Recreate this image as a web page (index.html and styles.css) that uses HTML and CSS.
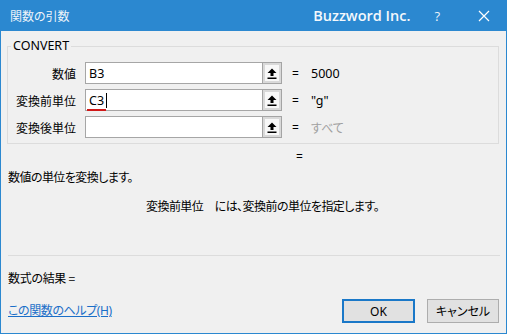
FILE: index.html
```html
<!DOCTYPE html>
<html lang="ja">
<head>
<meta charset="utf-8">
<link rel="stylesheet" href="styles.css">
</head>
<body>
<div class="window">
  <div class="titlebar">
    <span class="title">関数の引数</span>
    <span class="brand">Buzzword Inc.</span>
    <span class="help">?</span>
    <span class="close"><svg width="12" height="12" viewBox="0 0 12 12"><path d="M1 1L11 11M11 1L1 11" stroke="#fff" stroke-width="1.2" fill="none"/></svg></span>
  </div>
  <div class="body">
    <div class="group">
      <div class="legend">CONVERT</div>
      <div class="rows">
        <div class="label">数値</div>
        <div class="field"><span class="txt">B3</span></div>
        <div class="refbtn"><svg width="10" height="11" viewBox="0 0 10 11"><path d="M5 0.5L9.5 5H6.5V8H3.5V5H0.5Z" fill="#000"/><rect x="0.5" y="9.5" width="9" height="1.5" fill="#000"/></svg></div>
        <div class="eq">=</div>
        <div class="val">5000</div>

        <div class="label">変換前単位</div>
        <div class="field"><span class="txt squiggle">C3</span><span class="caret"></span></div>
        <div class="refbtn"><svg width="10" height="11" viewBox="0 0 10 11"><path d="M5 0.5L9.5 5H6.5V8H3.5V5H0.5Z" fill="#000"/><rect x="0.5" y="9.5" width="9" height="1.5" fill="#000"/></svg></div>
        <div class="eq">=</div>
        <div class="val">"g"</div>

        <div class="label">変換後単位</div>
        <div class="field"></div>
        <div class="refbtn"><svg width="10" height="11" viewBox="0 0 10 11"><path d="M5 0.5L9.5 5H6.5V8H3.5V5H0.5Z" fill="#000"/><rect x="0.5" y="9.5" width="9" height="1.5" fill="#000"/></svg></div>
        <div class="eq">=</div>
        <div class="val dim">すべて</div>
      </div>
    </div>
    <div class="result-eq">=</div>
    <div class="desc">数値の単位を変換します。</div>
    <div class="argdesc">変換前単位　には、変換前の単位を指定します。</div>
    <div class="sep"></div>
    <div class="formula">数式の結果 =</div>
    <div class="footer">
      <a class="helplink" href="#">この関数のヘルプ(H)</a>
      <div class="buttons">
        <button class="btn ok">OK</button>
        <button class="btn">キャンセル</button>
      </div>
    </div>
  </div>
</div>
</body>
</html>
```

FILE: styles.css
```css
* { box-sizing: border-box; }
html, body { margin: 0; padding: 0; }
body {
  width: 507px;
  height: 334px;
  overflow: hidden;
  font-family: "Noto Sans", "Noto Sans CJK JP", sans-serif;
  font-size: 12px;
  color: #000;
  background: #f0f0f0;
}
.window {
  width: 507px;
  height: 334px;
  background: #f0f0f0;
  border: 1px solid #2b88d0;
  border-top: none;
  display: flex;
  flex-direction: column;
}
.titlebar {
  height: 31px;
  margin: 0 -1px;
  background: #2b88d0;
  color: #fff;
  display: flex;
  align-items: center;
  padding-left: 10px;
  flex-shrink: 0;
}
.title {
  font-family: "Noto Sans CJK JP", sans-serif;
  font-feature-settings: "palt";
  font-size: 12px;
  color: #eef4fa;
  flex: 1;
}
.brand {
  font-family: "Open Sans", sans-serif;
  font-weight: 600;
  font-size: 14.5px;
  color: #f4f8fc;
  margin-right: 24px;
}
.help {
  font-family: "Open Sans", sans-serif;
  font-size: 13px;
  color: #eef4fa;
  margin-right: 38px;
}
.close {
  display: flex;
  margin-right: 17px;
}
.body {
  flex: 1;
  padding: 0 7px 0 6px;
  display: flex;
  flex-direction: column;
  font-family: "Noto Sans CJK JP", sans-serif;
  font-feature-settings: "palt";
}
.group {
  margin-top: 15px;
  border: 1px solid #dcdcdc;
  padding: 0 0 5px 0;
}
.legend {
  margin: -9px 0 0 3px;
  width: fit-content;
  padding: 0 2px;
  background: #f0f0f0;
  line-height: 16px;
  font-family: "Noto Sans", sans-serif;
  font-size: 12.5px;
}
.rows {
  margin-top: 8px;
  display: grid;
  grid-template-columns: 68px 186px 20px 29px auto;
  grid-auto-rows: 22px;
  row-gap: 5px;
  align-items: center;
}
.label {
  text-align: right;
}
.field {
  margin-left: 9px;
  height: 22px;
  background: #fff;
  border: 1px solid #a6a6a6;
  border-right: none;
  display: flex;
  align-items: center;
  padding-left: 3px;
  font-family: "Noto Sans", sans-serif;
  font-size: 12.5px;
}
.squiggle {
  border-bottom: 2px solid #d01818;
  padding: 0 2px;
  margin-left: -2px;
  line-height: 17px;
  margin-top: 2px;
}
.caret {
  display: inline-block;
  width: 1px;
  height: 15px;
  background: #000;
}
.refbtn {
  height: 22px;
  width: 20px;
  border: 1px solid #a4a4a4;
  background: #f8f8f8;
  box-shadow: inset 0 0 0 2px #d9d9d9;
  display: flex;
  align-items: center;
  justify-content: center;
}
.eq {
  padding-left: 10px;
  font-family: "Noto Sans", sans-serif;
}
.val {
  font-family: "Noto Sans", sans-serif;
  font-size: 12.5px;
}
.val.dim {
  color: #a0a0a0;
  font-family: "Noto Sans CJK JP", sans-serif;
  font-size: 12px;
}
.result-eq {
  margin-top: 5px;
  line-height: 16px;
  padding-left: 289px;
  font-family: "Noto Sans", sans-serif;
}
.desc {
  margin-top: 4px;
  line-height: 16px;
  padding-left: 1px;
  letter-spacing: -0.55px;
}
.argdesc {
  margin-top: 13px;
  line-height: 16px;
  padding-left: 139px;
  letter-spacing: -0.55px;
}
.sep {
  margin-top: 41px;
  height: 1px;
  background: #dcdcdc;
  margin-right: -1px;
  margin-left: 1px;
}
.formula {
  margin-top: 14px;
  line-height: 16px;
  padding-left: 1px;
  letter-spacing: -0.3px;
}
.footer {
  margin-top: 13px;
  display: flex;
  align-items: center;
  justify-content: space-between;
  padding-left: 1px;
}
.helplink {
  color: #1a6ec8;
  text-decoration: underline;
  line-height: 16px;
  font-family: "Noto Sans", "Noto Sans CJK JP", sans-serif;
  letter-spacing: -0.4px;
}
.buttons {
  display: flex;
  gap: 12px;
}
.btn {
  width: 72px;
  height: 24px;
  margin: 0;
  background: #e1e1e1;
  border: 1px solid #adadad;
  font-family: "Noto Sans", "Noto Sans CJK JP", sans-serif;
  font-feature-settings: "palt";
  font-size: 12px;
  color: #000;
  padding: 0;
}
.btn.ok {
  border: 2px solid #1a78c8;
  width: 73px;
}
```
